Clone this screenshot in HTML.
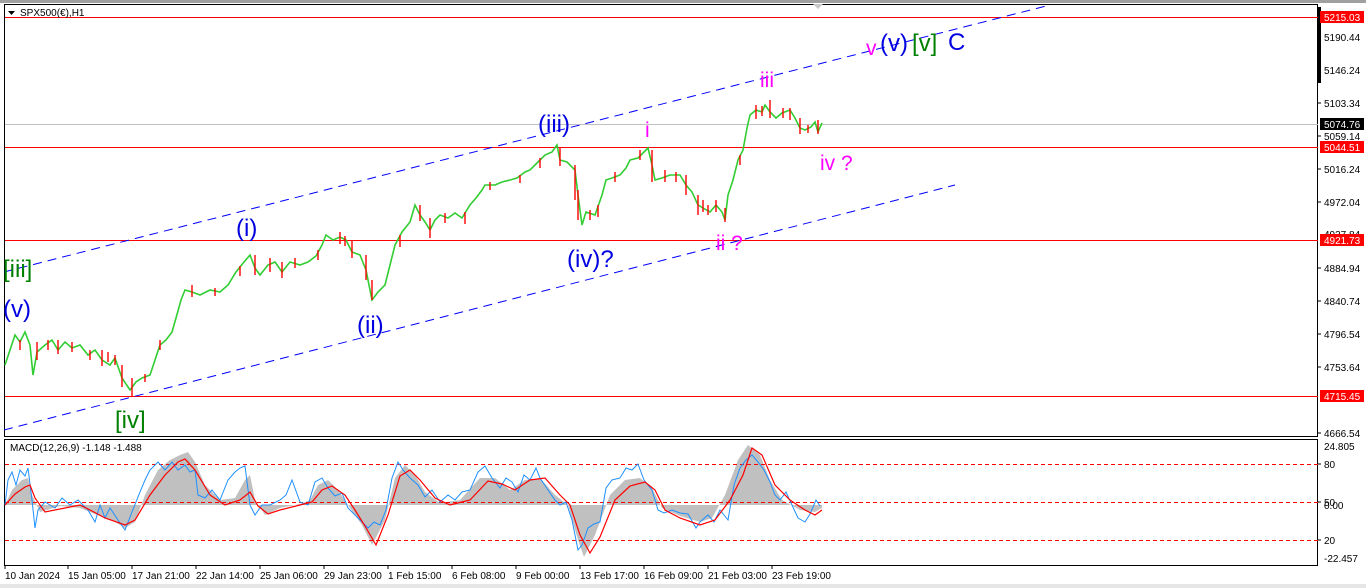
<!DOCTYPE html>
<html><head><meta charset="utf-8"><style>
html,body{margin:0;padding:0;background:#fff;}
body{width:1366px;height:588px;overflow:hidden;position:relative;font-family:"Liberation Sans",sans-serif;}
svg{position:absolute;left:0;top:0;}
.ax{font-family:"Liberation Sans",sans-serif;font-size:10px;fill:#000;}
.w{font-family:"Liberation Sans",sans-serif;font-size:24px;}
.m{font-family:"Liberation Sans",sans-serif;font-size:21px;fill:#ff00ff;}
</style></head><body>
<svg width="1366" height="588" viewBox="0 0 1366 588" xmlns="http://www.w3.org/2000/svg">
<rect x="0" y="0" width="1366" height="588" fill="#fff"/>
<rect x="0" y="0" width="1366" height="3" fill="#a0a0a0"/>
<rect x="0" y="584" width="1366" height="4" fill="#e6e6e6"/>
<rect x="4.5" y="4.5" width="1313" height="432" fill="none" stroke="#000"/>
<rect x="4.5" y="439.5" width="1313" height="126" fill="none" stroke="#000"/>
<line x1="5" y1="17.5" x2="1318" y2="17.5" stroke="#f00"/>
<line x1="5" y1="124.5" x2="1318" y2="124.5" stroke="#c0c0c0"/>
<line x1="5" y1="147.5" x2="1318" y2="147.5" stroke="#f00"/>
<line x1="5" y1="240.5" x2="1318" y2="240.5" stroke="#f00"/>
<line x1="5" y1="396.5" x2="1318" y2="396.5" stroke="#f00"/>
<line x1="4" y1="272" x2="1050" y2="5" stroke="#00f" stroke-dasharray="9,6"/>
<line x1="4" y1="430" x2="955" y2="185" stroke="#00f" stroke-dasharray="9,6"/>
<polyline fill="none" stroke="#32cd32" stroke-width="1.6" points="5,365 10,350 15,335 20,342 25,332 30,345 33,375 37,352 45,345 52,340 58,350 65,342 72,348 80,345 88,355 95,350 102,360 110,365 115,358 122,378 130,390 136,382 142,378 150,375 155,360 160,345 166,340 172,332 176,318 181,300 185,290 192,292 200,295 210,290 220,292 228,285 236,272 244,262 250,255 255,268 260,275 268,265 275,262 282,272 290,262 300,265 308,262 316,256 322,245 326,235 333,240 340,237 346,240 352,252 360,255 366,270 372,300 378,292 385,285 390,265 395,245 402,232 410,222 415,205 420,215 425,222 430,230 435,220 440,215 448,218 455,213 462,218 470,205 476,198 482,190 485,185 495,185 502,182 510,180 517,178 525,172 530,170 538,162 545,155 552,152 557,145 560,160 567,162 575,170 578,195 582,225 586,212 595,215 602,195 606,180 612,178 620,175 626,168 630,160 638,158 644,152 648,148 652,165 655,180 662,178 670,175 680,175 686,185 692,192 698,205 703,208 710,212 716,205 722,212 725,220 728,195 733,180 738,160 743,150 747,128 750,115 756,110 762,112 765,105 770,112 776,118 782,113 790,110 795,118 800,128 805,130 811,127 815,122 818,132 822,123"/>
<g stroke="#f00" stroke-width="1.4" fill="none">
<path d="M37,342v18M58,340v14M102,350v16M122,365v22M132,378v18M192,285v12M255,255v20M282,262v16M352,240v18M366,255v25M372,280v20M430,218v20M560,148v18M575,165v35M578,190v30M652,150v32M686,175v20M698,195v20M703,200v12M725,208v14M756,105v14M770,100v18M800,118v16M818,120v14M108,352v10M160,340v10M340,232v12M420,205v16M465,212v12M598,205v12M665,170v12M716,200v12M783,108v10M20,340v10M48,340v10M72,342v10M90,350v10M115,355v10M145,374v8M215,288v8M240,266v10M270,258v14M295,258v10M318,250v10M345,236v10M400,235v12M445,213v10M490,182v8M520,175v8M540,158v10M590,210v10M615,172v10M640,150v10M676,172v10M708,205v10M740,155v10M762,106v10M790,108v12M808,125v8"/>
</g>
<text class="w" x="3" y="277" fill="#008000">[iii]</text>
<text class="w" x="3" y="317" fill="#0000e0">(v)</text>
<text class="w" x="115" y="428" fill="#008000">[iv]</text>
<text class="w" x="236" y="236" fill="#0000e0">(i)</text>
<text class="w" x="357" y="333" fill="#0000e0">(ii)</text>
<text class="w" x="538" y="132" fill="#0000e0">(iii)</text>
<text class="w" x="567" y="267" fill="#0000e0">(iv)?</text>
<text class="m" x="645" y="137">i</text>
<text class="m" x="760" y="87">iii</text>
<text class="m" x="716" y="250">ii ?</text>
<text class="m" x="820" y="170">iv ?</text>
<text class="m" x="866" y="55">v</text>
<text class="w" x="880" y="51" fill="#0000e0">(v)</text>
<text class="w" x="912" y="51" fill="#008000">[v]</text>
<text class="w" x="948" y="50" fill="#0000e0">C</text>
<path d="M8,11h7l-3.5,4z" fill="#000"/>
<text x="20" y="16" font-size="10" fill="#000">SPX500(€),H1</text>
<path d="M813,4h10l-5,5z" fill="#c8c8c8"/>
<rect x="1318" y="7" width="3" height="76" fill="#000"/>
<g class="ax">
<text x="1324" y="41">5190.44</text>
<text x="1324" y="74">5146.24</text>
<text x="1324" y="107">5103.34</text>
<text x="1324" y="140">5059.14</text>
<text x="1324" y="173">5016.24</text>
<text x="1324" y="206">4972.04</text>
<text x="1324" y="238">4937.84</text>
<text x="1324" y="272">4884.94</text>
<text x="1324" y="305">4840.74</text>
<text x="1324" y="338">4796.54</text>
<text x="1324" y="371">4753.64</text>
<text x="1324" y="401">4709.44</text>
<text x="1324" y="437">4666.54</text>
<text x="1324" y="450">24.805</text>
<text x="1324" y="468">80</text>
<text x="1324" y="506">50</text>
<text x="1324" y="509">0.00</text>
<text x="1324" y="544">20</text>
<text x="1324" y="562">-22.457</text>
</g>
<g font-size="10" font-family="Liberation Sans" fill="#fff">
<rect x="1320" y="11" width="44" height="12" fill="#f00"/><text x="1324" y="21">5215.03</text>
<rect x="1320" y="118" width="44" height="12" fill="#000"/><text x="1324" y="128">5074.76</text>
<rect x="1320" y="141" width="44" height="12" fill="#f00"/><text x="1324" y="151">5044.51</text>
<rect x="1320" y="234" width="44" height="12" fill="#f00"/><text x="1324" y="244">4921.73</text>
<rect x="1320" y="390" width="44" height="12" fill="#f00"/><text x="1324" y="400">4715.45</text>
</g>
<g stroke="#000"><path d="M1318,38h3M1318,71h3M1318,103h3M1318,136h3M1318,169h3M1318,202h3M1318,268h3M1318,301h3M1318,334h3M1318,367h3M1318,433h3M1318,464h3M1318,502h3M1318,540h3"/></g>
<text x="10" y="451" font-size="10" fill="#000">MACD(12,26,9) -1.148 -1.488</text>
<polygon fill="#c0c0c0" points="5,505 12,490 22,480 28,478 32,495 40,512 60,506 80,508 95,514 115,522 125,528 135,522 145,495 158,470 170,460 180,455 188,452 195,462 205,485 220,500 235,498 245,480 250,475 255,500 265,515 280,508 300,504 310,500 318,485 328,480 338,490 350,508 362,525 372,545 385,520 395,478 405,465 415,475 425,492 440,503 460,500 480,478 495,478 510,490 525,480 540,478 555,495 568,505 578,540 584,557 595,535 610,495 625,480 640,478 652,488 662,508 680,516 700,522 712,518 725,495 738,460 748,445 760,455 770,480 782,500 800,510 815,512 822,508 822,505"/>
<g stroke="#f00" stroke-dasharray="4,3"><path d="M5,464.5H1318M5,502.5H1318M5,540.5H1318"/></g>
<polyline fill="none" stroke="#1e90ff" points="5,505 8,480 12,472 16,485 20,470 25,476 28,468 32,500 35,528 38,510 45,502 55,508 62,498 70,505 78,500 88,510 95,522 100,505 105,518 110,508 118,520 125,530 132,512 140,492 145,480 150,470 158,462 165,470 172,462 178,470 185,465 190,472 195,470 198,495 205,498 212,490 220,500 228,480 235,472 240,468 245,466 250,505 255,515 262,505 270,505 280,500 286,495 292,480 300,502 308,505 315,482 322,478 328,488 335,496 342,493 348,508 355,515 360,520 368,528 374,522 380,525 386,510 392,478 398,462 403,470 410,478 418,485 425,497 432,490 440,502 448,495 455,500 462,492 470,490 478,472 485,466 492,478 500,488 506,478 512,482 518,492 524,475 530,480 536,468 540,478 548,490 555,500 560,505 566,502 572,520 578,550 582,545 588,528 594,524 600,522 606,488 612,480 620,478 626,468 632,470 638,464 644,480 652,490 658,510 664,513 672,510 680,513 688,514 696,528 700,522 708,515 714,522 720,510 728,520 734,485 740,468 746,460 752,455 758,462 764,470 770,482 775,495 780,500 786,492 792,505 798,518 805,522 810,514 816,500 820,506"/>
<polyline fill="none" stroke="#f00" stroke-width="1.2" points="5,505 15,494 25,487 30,485 35,498 45,512 65,508 80,505 90,510 105,518 125,525 135,520 150,495 165,475 178,462 185,459 195,470 210,495 225,505 240,500 250,492 258,506 268,514 280,510 300,505 312,502 322,490 332,486 345,495 355,510 365,526 376,545 388,515 400,476 410,470 420,480 435,498 450,505 470,500 488,481 502,484 515,490 530,480 545,478 560,495 570,505 580,535 590,553 600,537 615,500 630,486 645,482 655,490 665,510 680,518 700,525 715,520 730,500 743,475 752,448 762,455 775,485 790,500 805,510 815,515 822,510"/>
<g stroke="#000"><path d="M5,565v4M68,565v4M132,565v4M196,565v4M260,565v4M324,565v4M388,565v4M452,565v4M516,565v4M580,565v4M644,565v4M708,565v4M772,565v4"/></g>
<g class="ax">
<text x="5" y="579">10 Jan 2024</text>
<text x="68" y="579">15 Jan 05:00</text>
<text x="132" y="579">17 Jan 21:00</text>
<text x="196" y="579">22 Jan 14:00</text>
<text x="260" y="579">25 Jan 06:00</text>
<text x="324" y="579">29 Jan 23:00</text>
<text x="388" y="579">1 Feb 15:00</text>
<text x="452" y="579">6 Feb 08:00</text>
<text x="516" y="579">9 Feb 00:00</text>
<text x="580" y="579">13 Feb 17:00</text>
<text x="644" y="579">16 Feb 09:00</text>
<text x="708" y="579">21 Feb 03:00</text>
<text x="772" y="579">23 Feb 19:00</text>
</g>
</svg>
</body></html>
